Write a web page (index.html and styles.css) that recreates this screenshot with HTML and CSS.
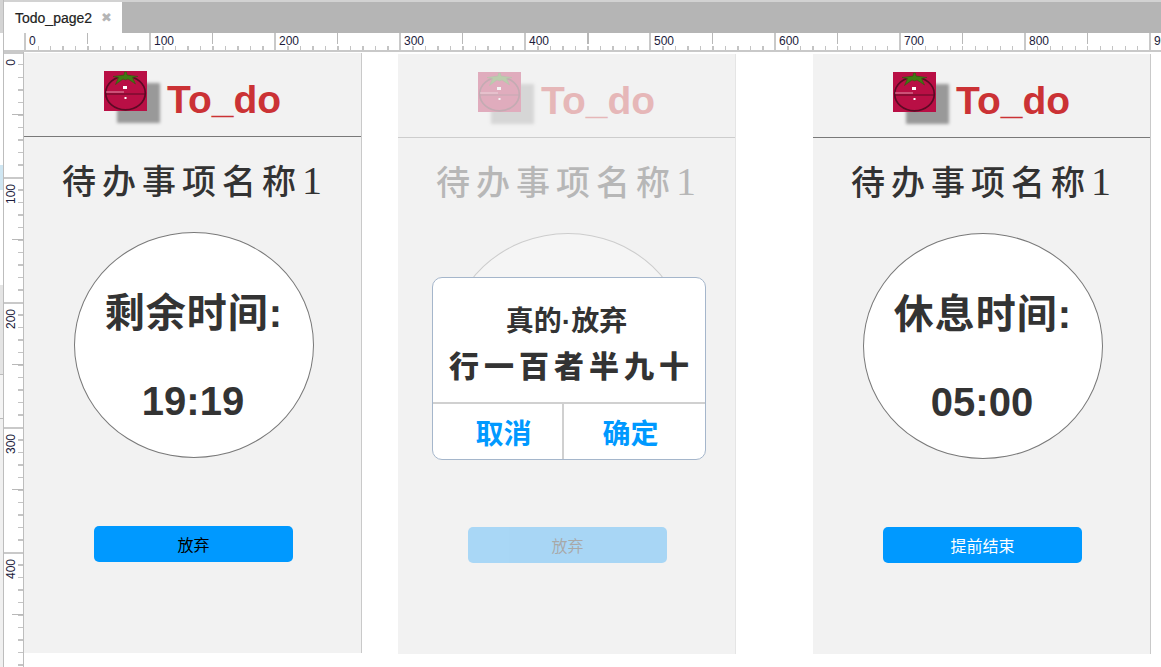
FILE: index.html
```html
<!DOCTYPE html>
<html lang="zh-CN">
<head>
  <meta charset="UTF-8">
  <meta name="viewport" content="width=device-width, initial-scale=1">
  <title>Todo_page2</title>
  <link rel="stylesheet" href="styles.css">
</head>
<body>
<svg class="defs" width="0" height="0">
  <symbol id="tomato" viewBox="0 0 43 40">
    <rect width="43" height="40" fill="#b90f45"/>
    <ellipse cx="21.500" cy="22" rx="19.800" ry="16.800" fill="#b90f45" stroke="#5c0a24" stroke-width="1.700"/>
    <path d="M1.500 23H41.500" stroke="#5c0a24" stroke-width="1"/>
    <path d="M20.500 1h2l.5 3 11 1.500-5.500 1 3 6.500-7.500-5-2.500 1-2.500-1-7.500 5.500 3-7-5.500-1 11-1.500z" fill="#3f7a12" stroke="#2c560c" stroke-width=".5"/>
    <rect x="19" y="15" width="4" height="3" fill="#fff"/>
    <rect x="20.500" y="26" width="2" height="2" fill="#fff"/>
    <path d="M2 21H20" stroke="#e9b3c4" stroke-width=".8"/>
  </symbol>
</svg>

<div class="app">
  <div class="side-strip">
    <div class="strip-top"></div>
    <div class="strip-white"></div>
    <div class="strip-blue"></div>
    <div class="strip-white strip-tall"></div>
    <div class="strip-grey"></div>
    <div class="strip-handle"></div>
    <div class="strip-rest"></div>
  </div>

  <div class="main">
    <div class="tabbar">
      <div class="tab">
        <span class="tab-name">Todo_page2</span>
        <span class="tab-close">✖</span>
      </div>
    </div>

    <div class="ruler-top">
      <span>0</span><span>100</span><span>200</span><span>300</span><span>400</span>
      <span>500</span><span>600</span><span>700</span><span>800</span><span>900</span>
    </div>

    <div class="work">
      <div class="ruler-left">
        <span><b>0</b></span><span><b>100</b></span><span><b>200</b></span><span><b>300</b></span><span><b>400</b></span>
      </div>

      <div class="canvas">
        <section class="screen screen-first">
          <div class="screen-body">
            <header class="screen-head">
              <svg class="logo"><use href="#tomato"/></svg>
              <span class="brand">To_do</span>
            </header>
            <h2 class="task-name">待办事项名称<span class="task-num">1</span></h2>
            <div class="clock">
              <div class="clock-label">剩余时间:</div>
              <div class="clock-time">19:19</div>
            </div>
            <button class="action">放弃</button>
          </div>
        </section>

        <section class="screen screen-dialog">
          <div class="screen-body dimmed">
            <header class="screen-head">
              <svg class="logo"><use href="#tomato"/></svg>
              <span class="brand">To_do</span>
            </header>
            <h2 class="task-name">待办事项名称<span class="task-num">1</span></h2>
            <div class="clock"></div>
            <button class="action">放弃</button>
          </div>
          <div class="dialog">
            <div class="dialog-msg">
              <div class="dialog-title">真的·放弃</div>
              <div class="dialog-quote">行一百者半九十</div>
            </div>
            <div class="dialog-btns">
              <div class="dialog-btn btn-cancel">取消</div>
              <div class="dialog-btn btn-ok">确定</div>
            </div>
          </div>
        </section>

        <section class="screen screen-rest">
          <div class="screen-body">
            <header class="screen-head">
              <svg class="logo"><use href="#tomato"/></svg>
              <span class="brand">To_do</span>
            </header>
            <h2 class="task-name">待办事项名称<span class="task-num">1</span></h2>
            <div class="clock">
              <div class="clock-label">休息时间:</div>
              <div class="clock-time">05:00</div>
            </div>
            <button class="action action-light">提前结束</button>
          </div>
        </section>
      </div>
    </div>
  </div>
</div>
</body>
</html>
```

FILE: styles.css
```css
* {
  box-sizing: border-box;
}
html, body {
  margin: 0;
  height: 100%;
  overflow: hidden;
}
body {
  font-family: "Liberation Sans", "Noto Sans CJK SC", sans-serif;
  background: #fff;
  color: #333;
}
.defs {
  position: absolute;
}
.app {
  display: flex;
  height: 667px;
}

/* left edge of the editor */
.side-strip {
  width: 4px;
  flex: none;
  display: flex;
  flex-direction: column;
  border-right: 1px solid #bdbdbd;
  background: #f0f0f0;
}
.strip-top {
  height: 33px;
  background: #d4d4d4;
}
.strip-white {
  height: 132px;
  background: #fff;
}
.strip-blue {
  height: 25px;
  background: #cfe6f2;
}
.strip-tall {
  height: 95px;
}
.strip-grey {
  height: 89px;
  background: #e4e4e4;
}
.strip-handle {
  height: 45px;
  background: #f4f4f4;
  border-top: 1px solid #bbb;
  border-bottom: 1px solid #bbb;
}
.strip-rest {
  flex: 1;
  background: #f0f0f0;
}

.main {
  flex: 1;
  min-width: 0;
  display: flex;
  flex-direction: column;
}

/* tabs */
.tabbar {
  height: 33px;
  flex: none;
  background: #b5b5b5;
  border-top: 2px solid #d2d2d2;
}
.tab {
  width: 118px;
  height: 31px;
  background: #fff;
  display: flex;
  align-items: center;
  padding-left: 11px;
}
.tab-name {
  font-size: 14px;
  color: #222;
  -webkit-text-stroke: 0.2px #222;
}
.tab-close {
  margin-left: 9px;
  font-family: "DejaVu Sans", sans-serif;
  font-size: 13px;
  color: #b5b5b5;
}

/* rulers */
.ruler-top {
  height: 19px;
  flex: none;
  display: flex;
  padding-left: 20px;
  border-bottom: 2px solid #c9c9c9;
  overflow: hidden;
  background:
    repeating-linear-gradient(90deg, #b8b8b8 0 1px, transparent 1px 62.5px) 21px 0 / auto 11px no-repeat,
    repeating-linear-gradient(90deg, #c4c4c4 0 1px, transparent 1px 12.5px) 21px 13px / auto 4px no-repeat,
    #fff;
}
.ruler-top span {
  flex: none;
  width: 125px;
  height: 17px;
  padding: 1px 0 0 3px;
  font-size: 12px;
  line-height: 14px;
  color: #1c1c3c;
  border-left: 2px solid #c9c9c9;
}
.work {
  flex: 1;
  min-height: 0;
  display: flex;
}
.ruler-left {
  width: 20px;
  flex: none;
  border-right: 1px solid #bdbdbd;
  background:
    repeating-linear-gradient(180deg, #b8b8b8 0 1px, transparent 1px 62.5px) 8px 0 / 11px auto no-repeat,
    repeating-linear-gradient(180deg, #c4c4c4 0 1px, transparent 1px 12.5px) 14px 0 / 5px auto no-repeat,
    #fff;
}
.ruler-left span {
  display: block;
  height: 125px;
  border-top: 2px solid #c9c9c9;
}
.ruler-left b {
  display: block;
  width: 14px;
  margin-top: 5px;
  font-weight: 400;
  font-size: 12px;
  line-height: 14px;
  color: #1c1c3c;
  writing-mode: vertical-rl;
  transform: rotate(180deg);
}

/* design canvas */
.canvas {
  flex: 1;
  min-width: 0;
  display: flex;
  align-items: flex-start;
  padding-top: 1px;
  background: #fff;
}
.screen {
  position: relative;
  flex: none;
  width: 338px;
  height: 600px;
  background: #f2f2f2;
}
.screen-dialog {
  margin-left: 36px;
  margin-top: 1px;
}
.screen-rest {
  margin-left: 77px;
  margin-top: 1px;
}
.screen-body {
  height: 100%;
  display: flex;
  flex-direction: column;
  border-right: 1px solid #c9c9c9;
}
.dimmed {
  opacity: 0.3;
}
.screen-head {
  height: 84px;
  flex: none;
  display: flex;
  align-items: flex-start;
  padding: 18px 0 0 80px;
  border-bottom: 1px solid #797979;
}
.logo {
  width: 43px;
  height: 40px;
  flex: none;
  box-shadow: 13px 12px 3px #999;
}
.brand {
  margin-left: 20px;
  margin-top: 6px;
  font-size: 39px;
  line-height: 46px;
  font-weight: 700;
  color: #cb3235;
}
.task-name {
  margin: 24px 0 0;
  height: 44px;
  padding-left: 38px;
  font-family: "Liberation Serif", "Noto Sans CJK SC", serif;
  font-size: 34px;
  line-height: 44px;
  font-weight: 500;
  letter-spacing: 6px;
  white-space: nowrap;
  color: #333;
}
.task-num {
  font-size: 40px;
  font-weight: 400;
  line-height: 40px;
}
.clock {
  width: 240px;
  height: 226px;
  margin: 27px 0 0 50px;
  flex: none;
  padding-top: 56px;
  border: 1px solid #797979;
  border-radius: 50%;
  background: #fff;
  text-align: center;
  font-weight: 700;
  color: #333;
}
.clock-label {
  font-size: 40px;
  line-height: 48px;
  letter-spacing: 1px;
  white-space: nowrap;
}
.clock-time {
  margin-top: 40px;
  padding-right: 2px;
  font-size: 40px;
  line-height: 48px;
}
.action {
  width: 199px;
  height: 36px;
  flex: none;
  margin: 68px 0 0 70px;
  padding: 0;
  border: none;
  border-radius: 5px;
  background: #0099ff;
  font-family: inherit;
  font-size: 16px;
  color: #000;
}
.action-light {
  color: #fff;
}

/* dialog over the second screen */
.dialog {
  position: absolute;
  left: 34px;
  top: 223px;
  width: 274px;
  height: 183px;
  display: flex;
  flex-direction: column;
  background: #fff;
  border: 1px solid #a5b6cb;
  border-radius: 10px;
  overflow: hidden;
  text-align: center;
  color: #333;
}
.dialog-msg {
  height: 126px;
  flex: none;
  padding-top: 25px;
  border-bottom: 2px solid #d0d0d0;
}
.dialog-title {
  padding-right: 5px;
  font-size: 28px;
  line-height: 38px;
  font-weight: 700;
  white-space: nowrap;
}
.dialog-quote {
  margin-top: 7px;
  padding-left: 5px;
  font-size: 30px;
  line-height: 38px;
  font-weight: 900;
  letter-spacing: 5px;
  white-space: nowrap;
}
.dialog-btns {
  flex: 1;
  display: flex;
}
.dialog-btn {
  display: flex;
  align-items: center;
  justify-content: center;
  font-size: 28px;
  font-weight: 700;
  color: #0099ff;
}
.btn-cancel {
  width: 131px;
  padding-left: 12px;
  border-right: 2px solid #d0d0d0;
}
.btn-ok {
  flex: 1;
  padding-right: 8px;
}
```
